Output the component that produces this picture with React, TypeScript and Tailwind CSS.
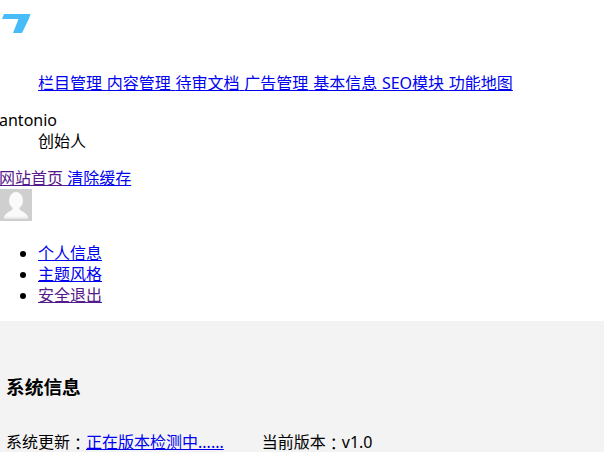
const font = { fontFamily: '"Noto Sans", "Noto Sans CJK SC", sans-serif' };

const navLinks = ["栏目管理", "内容管理", "待审文档", "广告管理", "基本信息", "SEO模块", "功能地图"];
const menuLinks = [
  { label: "个人信息", cls: "text-[#0000ee]" },
  { label: "主题风格", cls: "text-[#0000ee]" },
  { label: "安全退出", cls: "text-[#551a8b]" },
];

const Colon = () => (
  <span className="inline-block translate-y-[2px] leading-none font-['Noto_Sans_CJK_TC']">：</span>
);

const App = () => {
  return (
    <div className="w-[604px] h-[452px] overflow-hidden bg-white text-black text-base leading-[21px]" style={font}>
      <div className="h-[73px] pt-[14px]">
        <svg width="31" height="20" viewBox="0 0 31 20" className="block">
          <path d="M4 0H30.5L29 4.5L22 19H13L18.5 5H2Z" fill="#47bcf8" />
        </svg>
      </div>

      <div className="pl-[38px] whitespace-nowrap [word-spacing:0.6px]">
        {navLinks.map((label, i) => (
          <a key={label} href="#" className="text-[#0000ee] underline">
            {label}
            {i < navLinks.length - 1 ? " " : ""}
          </a>
        ))}
      </div>

      <div className="mt-[16px] -ml-[1px]">antonio</div>
      <div className="pl-[38px]">创始人</div>

      <div className="mt-[16px] -ml-[1px] whitespace-nowrap">
        <a href="#" className="text-[#551a8b] underline">网站首页 </a>
        <a href="#" className="text-[#0000ee] underline">清除缓存</a>
      </div>

      <div className="w-8 h-8 bg-[#cfcfcf] overflow-hidden">
        <svg width="32" height="32" viewBox="0 0 32 32" className="block">
          <defs>
            <linearGradient id="bust" x1="0" y1="0" x2="0" y2="1">
              <stop offset="0.75" stopColor="#fafafa" />
              <stop offset="1" stopColor="#e2e2e2" />
            </linearGradient>
          </defs>
          <ellipse cx="16" cy="11.5" rx="7" ry="8.5" fill="#fafafa" />
          <path d="M13 18H19L20 21C24 23 27 25 28 28V30H4V28C5 25 8 23 12 21Z" fill="url(#bust)" />
        </svg>
      </div>

      <ul className="mt-[22px] pl-[38px] list-disc">
        {menuLinks.map((item) => (
          <li key={item.label}>
            <a href="#" className={`${item.cls} underline`}>
              {item.label}
            </a>
          </li>
        ))}
      </ul>

      <div className="mt-[15px] h-[131px] bg-[#f3f3f3] px-[6px] pt-[53px]">
        <h2 className="text-[18.72px] leading-[25px] font-bold">系统信息</h2>
        <div className="mt-[33px] flex">
          <span>
            系统更新<Colon />
            <a href="#" className="text-[#0000ee] underline">正在版本检测中......</a>
          </span>
          <span className="ml-[38px]">
            当前版本<Colon />v1.0
          </span>
        </div>
      </div>
    </div>
  );
};

export default App;
